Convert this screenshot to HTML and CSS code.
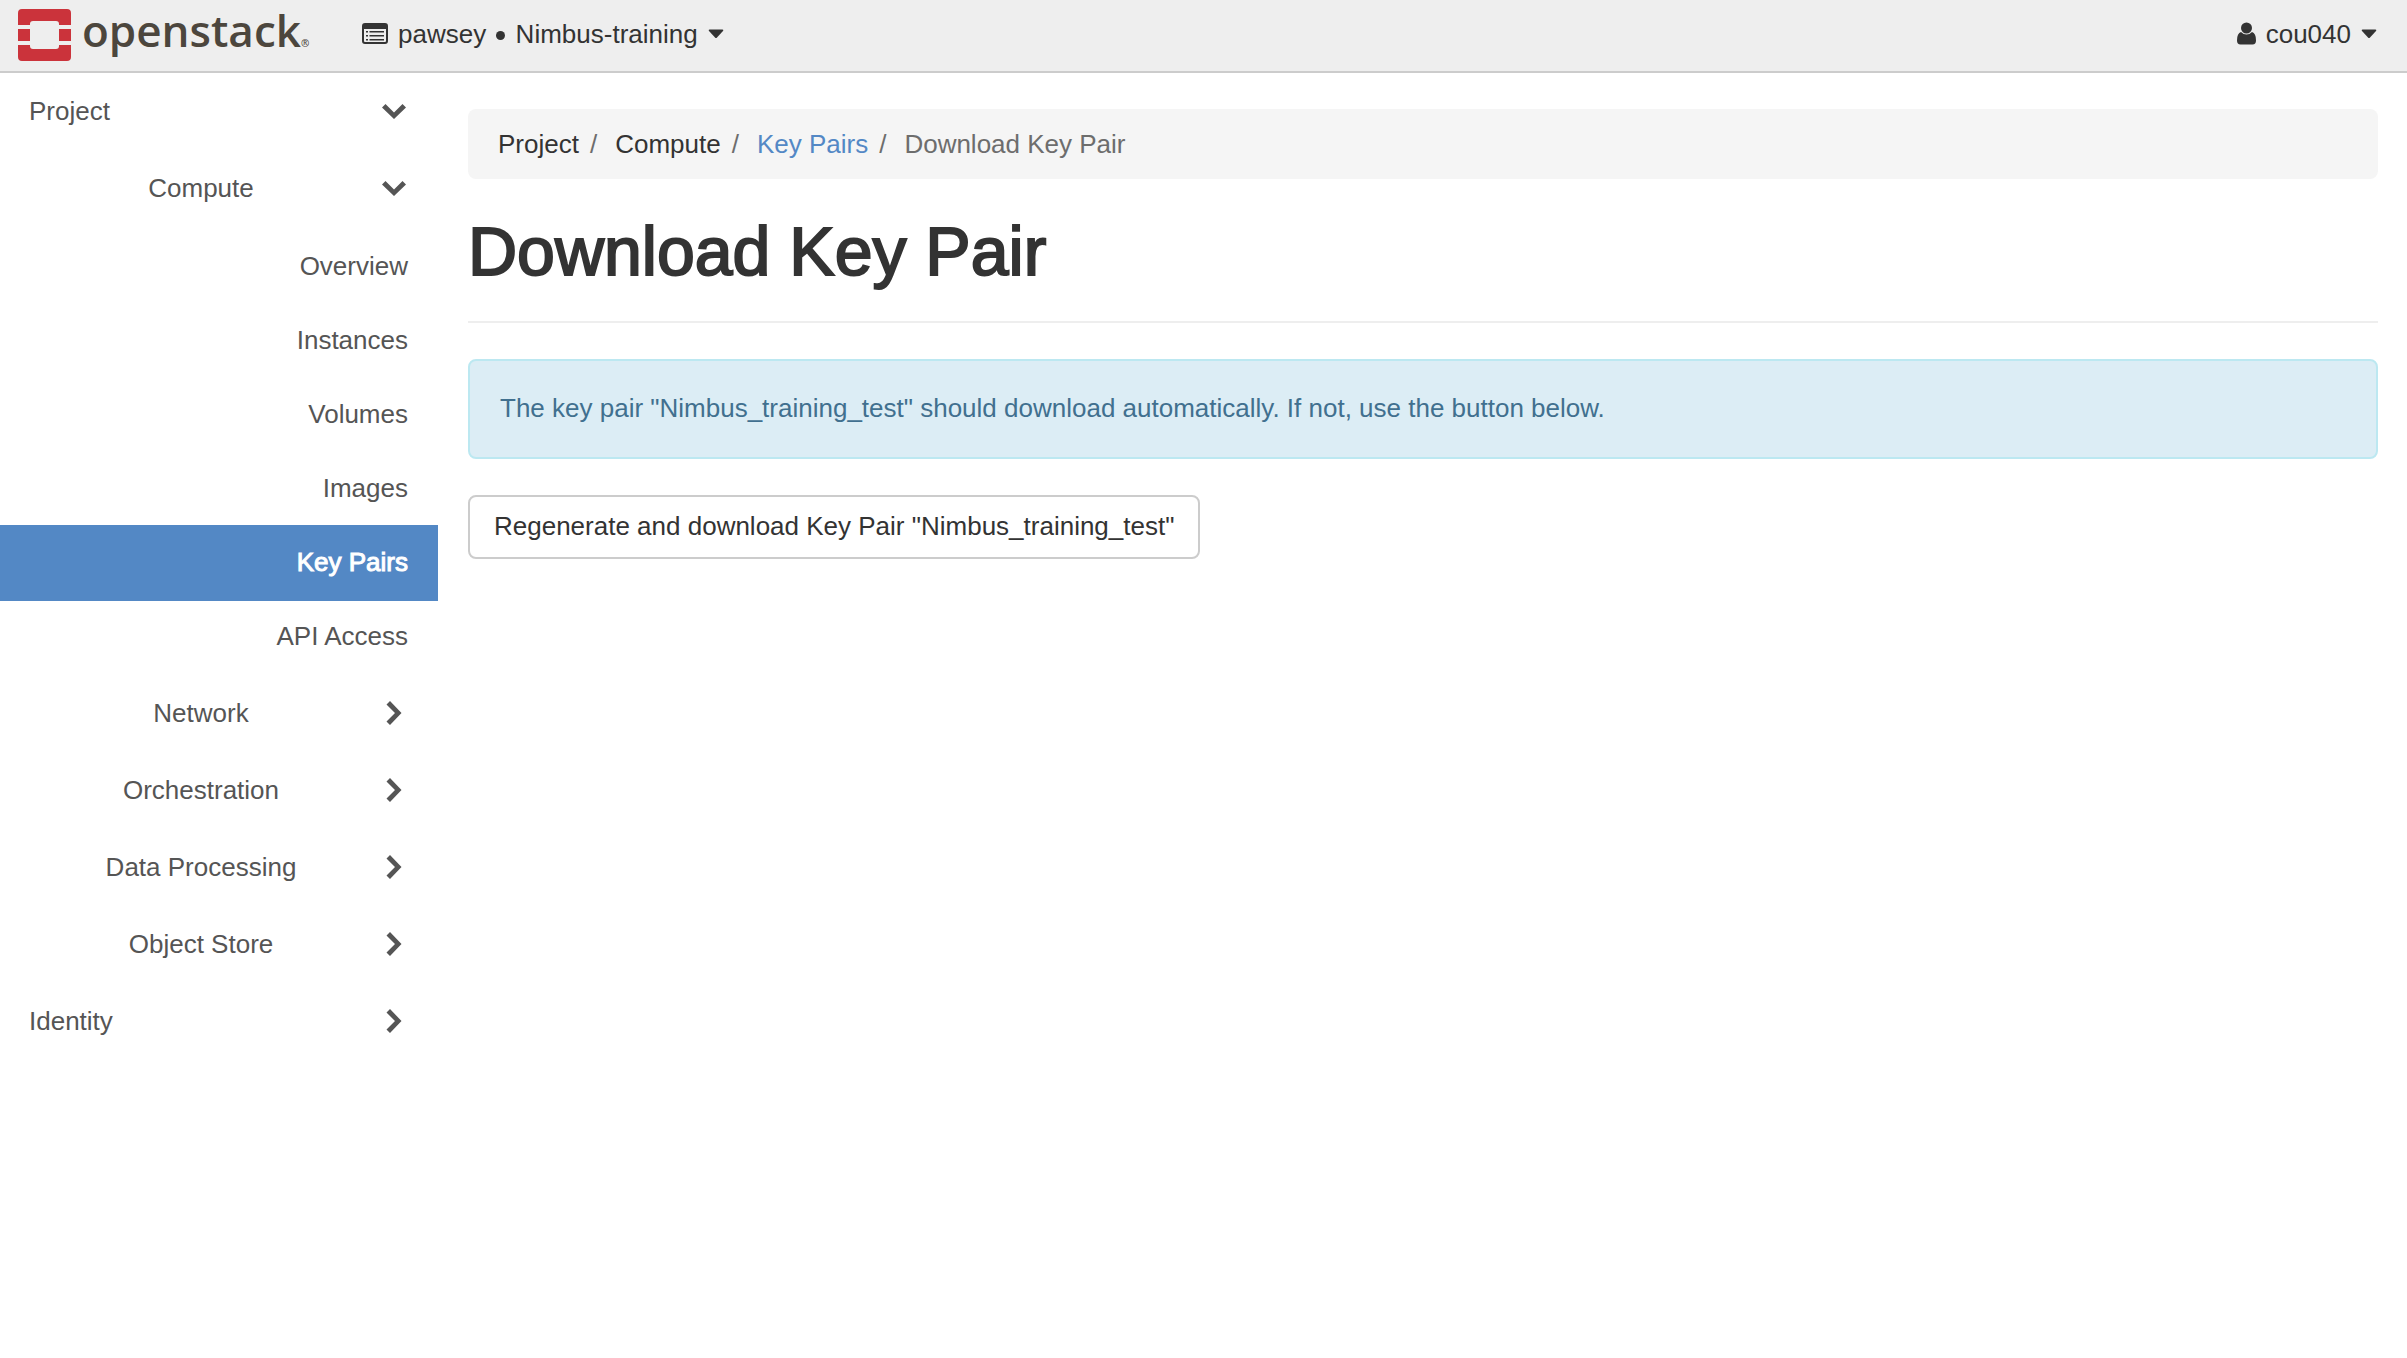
FILE: index.html
```html
<!DOCTYPE html>
<html lang="en">
<head>
<meta charset="utf-8">
<meta name="viewport" content="width=device-width, initial-scale=1">
<title>Download Key Pair - OpenStack Dashboard</title>
<link rel="stylesheet" href="styles.css">
</head>
<body>
<svg class="sprite" aria-hidden="true">
  <symbol id="chevron-down" viewBox="0 0 28 28"><path d="M2 10.500L5.500 7L14 15.500L22.500 7L26 10.500L14 22Z"/></symbol>
  <symbol id="chevron-right" viewBox="0 0 28 28"><path d="M6.500 5.500L10 2L21.500 14L10 26L6.500 22.500L15 14Z"/></symbol>
  <symbol id="caret" viewBox="0 0 16 10"><path d="M1.500 0.500H14.500Q16 0.500 15 2L9 8.500Q8 9.500 7 8.500L1 2Q0 0.500 1.500 0.500Z"/></symbol>
</svg>

<header class="topbar">
  <a class="brand" href="#">
    <svg class="brand-mark" viewBox="0 0 53 52" aria-hidden="true">
      <path d="M4 0H49Q53 0 53 4V16H41V15Q41 12 38 12H15Q12 12 12 15V16H0V4Q0 0 4 0Z"/>
      <path d="M0 20H12V32H0ZM41 20H53V32H41Z"/>
      <path d="M0 36H12V37Q12 40 15 40H38Q41 40 41 37V36H53V48Q53 52 49 52H4Q0 52 0 48Z"/>
    </svg>
    <span class="brand-name">openstack<small class="brand-reg">®</small></span>
  </a>
  <button class="menu" type="button">
    <svg class="list-icon" viewBox="0 0 26 21" aria-hidden="true">
      <path fill-rule="evenodd" d="M3 0H23Q26 0 26 3V18Q26 21 23 21H3Q0 21 0 18V3Q0 0 3 0ZM2 6V18Q2 19 3 19H23Q24 19 24 18V6Z"/>
      <path d="M4 8H6V9.500H4ZM4 12H6V13.500H4ZM4 16H6V17.500H4ZM7.500 8H22V9.500H7.500ZM7.500 12H22V13.500H7.500ZM7.500 16H22V17.500H7.500Z"/>
    </svg>
    <span class="context">pawsey <i class="dot"></i> Nimbus-training</span>
    <svg class="caret" aria-hidden="true"><use href="#caret"/></svg>
  </button>
  <button class="menu user" type="button">
    <svg class="user-icon" viewBox="0 0 19 23" aria-hidden="true">
      <circle cx="9.500" cy="6" r="5.500"/>
      <path d="M4 10Q6.500 12.500 9.500 12.500T15 10Q19 11 19 18.500Q19 22.500 15.500 22.500H3.500Q0 22.500 0 18.500Q0 11 4 10Z"/>
    </svg>
    <span>cou040</span>
    <svg class="caret" aria-hidden="true"><use href="#caret"/></svg>
  </button>
</header>

<div class="layout">
  <nav class="sidebar" aria-label="Dashboard">
    <a class="group" href="#">Project<svg class="chevron" aria-hidden="true"><use href="#chevron-down"/></svg></a>
    <a class="group sub" href="#"><span>Compute</span><svg class="chevron" aria-hidden="true"><use href="#chevron-down"/></svg></a>
    <ul class="panels">
      <li><a class="panel" href="#">Overview</a></li>
      <li><a class="panel" href="#">Instances</a></li>
      <li><a class="panel" href="#">Volumes</a></li>
      <li><a class="panel" href="#">Images</a></li>
      <li><a class="panel active" href="#" aria-current="page">Key Pairs</a></li>
      <li><a class="panel" href="#">API Access</a></li>
    </ul>
    <a class="group sub" href="#"><span>Network</span><svg class="chevron" aria-hidden="true"><use href="#chevron-right"/></svg></a>
    <a class="group sub" href="#"><span>Orchestration</span><svg class="chevron" aria-hidden="true"><use href="#chevron-right"/></svg></a>
    <a class="group sub" href="#"><span>Data Processing</span><svg class="chevron" aria-hidden="true"><use href="#chevron-right"/></svg></a>
    <a class="group sub" href="#"><span>Object Store</span><svg class="chevron" aria-hidden="true"><use href="#chevron-right"/></svg></a>
    <a class="group" href="#">Identity<svg class="chevron" aria-hidden="true"><use href="#chevron-right"/></svg></a>
  </nav>

  <main class="content">
    <ol class="breadcrumb">
      <li>Project</li>
      <li>Compute</li>
      <li><a href="#">Key Pairs</a></li>
      <li class="current">Download Key Pair</li>
    </ol>
    <h1 class="page-title">Download Key Pair</h1>
    <p class="alert">The key pair "Nimbus_training_test" should download automatically. If not, use the button below.</p>
    <button class="btn" type="button">Regenerate and download Key Pair "Nimbus_training_test"</button>
  </main>
</div>
</body>
</html>
```
FILE: styles.css
```css
* {
  box-sizing: border-box;
}

body {
  margin: 0;
  background: #fff;
  color: #333;
  font: 26px/38px "Liberation Sans", Arial, sans-serif;
}

a {
  text-decoration: none;
}

svg {
  flex: none;
  fill: currentColor;
}

.sprite {
  position: absolute;
  width: 0;
  height: 0;
}

/* Top bar */
.topbar {
  display: flex;
  align-items: center;
  height: 73px;
  padding: 0 30px 4px 18px;
  background: #eee;
  border-bottom: 2px solid #ccc;
}

.brand {
  display: flex;
  align-items: center;
  gap: 11px;
  width: 344px;
  color: #4c463d;
}

.brand-mark {
  width: 53px;
  height: 52px;
  margin-top: 2px;
}

.brand-mark path {
  fill: #cb333b;
}

.brand-name {
  padding-top: 6px;
  font: 600 44px/52px "Open Sans", sans-serif;
}

.brand-reg {
  font-size: 10px;
}

.menu {
  display: flex;
  align-items: center;
  padding: 0;
  border: 0;
  background: none;
  color: #333;
  font: inherit;
}

.user {
  margin-left: auto;
}

.list-icon {
  width: 26px;
  height: 21px;
  margin-right: 10px;
}

.user-icon {
  width: 19px;
  height: 23px;
  margin-right: 10px;
}

.dot {
  display: inline-block;
  width: 9px;
  height: 9px;
  margin: 0 3px;
  border-radius: 50%;
  background: currentColor;
  vertical-align: 3px;
}

.caret {
  width: 16px;
  height: 10px;
  margin-left: 10px;
}

/* Side navigation */
.layout {
  display: flex;
}

.sidebar {
  flex: none;
  width: 438px;
}

.group {
  display: flex;
  align-items: center;
  justify-content: space-between;
  gap: 7px;
  height: 77px;
  padding: 0 30px 2px 29px;
  color: #555;
}

.sub span {
  flex: 1;
  text-align: center;
}

.chevron {
  width: 28px;
  height: 28px;
}

.panels {
  margin: 0;
  padding: 2px 0;
  list-style: none;
}

.panel {
  display: block;
  padding: 18px 30px;
  color: #555;
  text-align: right;
}

.active {
  margin-bottom: -2px;
  padding-bottom: 20px;
  background: #5388c5;
  color: #fff;
  -webkit-text-stroke: 1px currentColor;
}

/* Page content */
.content {
  flex: 1;
  padding: 36px 29px 36px 30px;
}

.breadcrumb {
  display: flex;
  margin: 0;
  padding: 16px 30px;
  border-radius: 8px;
  background: #f5f5f5;
  list-style: none;
}

.breadcrumb li + li::before {
  content: "/";
  padding: 0 18px 0 11px;
  color: #6d6d6d;
}

.breadcrumb a {
  color: #5388c5;
}

.breadcrumb .current {
  color: #6d6d6d;
}

.page-title {
  margin: 35px 0 36px;
  padding-bottom: 33px;
  border-bottom: 2px solid #eee;
  font-size: 68px;
  font-weight: 400;
  line-height: 74px;
  -webkit-text-stroke: 2px currentColor;
}

.alert {
  margin: 0 0 36px;
  padding: 28px 30px 30px;
  border: 2px solid #bce8f1;
  border-radius: 8px;
  background: #dcedf5;
  color: #41708f;
}

.btn {
  padding: 10px 24px 12px;
  border: 2px solid #ccc;
  border-radius: 8px;
  background: #fff;
  color: #333;
  font: inherit;
}
```
